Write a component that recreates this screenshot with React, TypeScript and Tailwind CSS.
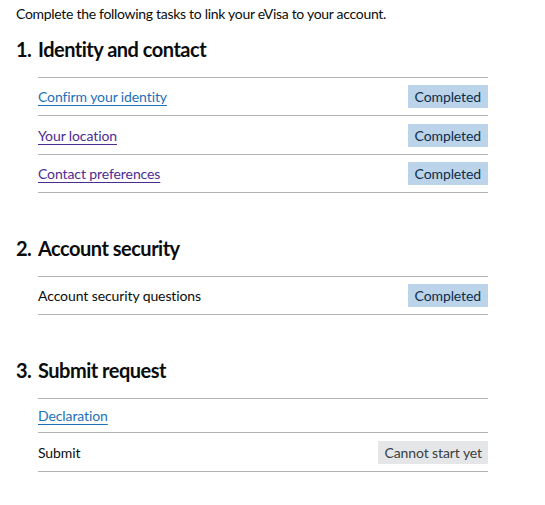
import React from "react";

type Row = { label: string; href?: "link" | "visited"; status?: "done" | "cannot"; tall?: boolean };

const sections: { n: string; title: string; rows: Row[] }[] = [
  {
    n: "1.",
    title: "Identity and contact",
    rows: [
      { label: "Confirm your identity", href: "link", status: "done" },
      { label: "Your location", href: "visited", status: "done", tall: true },
      { label: "Contact preferences", href: "visited", status: "done" },
    ],
  },
  {
    n: "2.",
    title: "Account security",
    rows: [{ label: "Account security questions", status: "done" }],
  },
  {
    n: "3.",
    title: "Submit request",
    rows: [
      { label: "Declaration", href: "link" },
      { label: "Submit", status: "cannot", tall: true },
    ],
  },
];

export default function App() {
  return (
    <div
      className="min-h-[505px] w-[545px] bg-white pl-4 pt-[4px] text-[#0b0c0c]"
      style={{ fontFamily: 'Lato, "Liberation Sans", Arial, sans-serif' }}
    >
      <p className="text-[14px] leading-[20px] tracking-[-0.3px]">
        Complete the following tasks to link your eVisa to your account.
      </p>
      <ol className="mt-[13px]">
        {sections.map((s, i) => (
          <li key={s.n} className={i > 0 ? "mt-[43px]" : ""}>
            <h2 className="flex text-[20px] font-bold leading-[25px] tracking-[-0.5px]">
              <span className="w-[22px]">{s.n}</span>
              <span>{s.title}</span>
            </h2>
            <ul className="ml-[22px] mt-[15px] w-[450px] border-t border-[#b1b4b6]">
              {s.rows.map((r) => (
                <li
                  key={r.label}
                  className={`flex items-center justify-between border-b border-[#b1b4b6] py-[7px] text-[14px] leading-[19px] tracking-[-0.1px] ${
                    r.tall ? "min-h-[39px]" : "min-h-[34px]"
                  }`}
                >
                  {r.href ? (
                    <a
                      href="#"
                      className={
                        r.href === "link"
                          ? "text-[#1d70b8] underline decoration-1 underline-offset-[3px]"
                          : "text-[#4c2c92] underline decoration-1 underline-offset-[3px]"
                      }
                    >
                      {r.label}
                    </a>
                  ) : (
                    <span>{r.label}</span>
                  )}
                  {r.status === "done" && (
                    <span className="bg-[#bbd4ea] px-[7px] py-[2px] leading-[19px] text-[#0c2d4a]">
                      Completed
                    </span>
                  )}
                  {r.status === "cannot" && (
                    <span className="bg-[#e5e6e7] px-[6px] py-[2px] leading-[19px] text-[#383f43]">
                      Cannot start yet
                    </span>
                  )}
                </li>
              ))}
            </ul>
          </li>
        ))}
      </ol>
    </div>
  );
}
